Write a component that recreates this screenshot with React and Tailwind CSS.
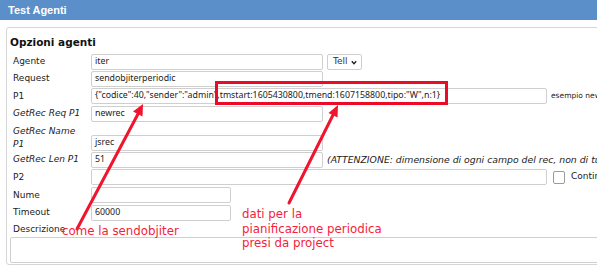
import React from 'react';

const ui = { fontFamily: '"DejaVu Sans", Verdana, sans-serif' };
const field = { fontFamily: '"Noto Sans", "Open Sans", sans-serif' };

const Field = ({ value = '', w = 'w-[232px]' }) => (
  <div
    className={`${w} h-[16px] shrink-0 border border-[#cfcfcf] rounded-[2px] bg-white px-[3px] flex items-center text-[8.8px] text-[#222] whitespace-nowrap overflow-hidden`}
    style={field}
  >
    {value}
  </div>
);

const Label = ({ children, italic }) => (
  <div className={`w-[81px] shrink-0 pl-[3px] text-[9px] leading-[13px] text-[#222] ${italic ? 'italic' : ''}`}>
    {children}
  </div>
);

const App = () => {
  return (
    <div className="relative w-[597px] h-[270px] overflow-hidden bg-white" style={ui}>
      {/* Header */}
      <div className="h-[20px] bg-[#5b8fca] flex items-center pl-[8px]">
        <span className="text-white font-bold text-[11px]" style={{ fontFamily: '"Liberation Sans", Arial, sans-serif' }}>
          Test Agenti
        </span>
      </div>

      {/* Panel */}
      <div className="mt-[7px] ml-[6px] w-[640px] h-[238px] border border-[#d6d6d6] rounded-[3px] pl-[3px] pt-[7px]">
        <div className="text-[10.5px] leading-[14px] font-bold text-[#111]">Opzioni agenti</div>

        <div className="mt-[4px] flex flex-col">
          <div className="flex items-center h-[17px]">
            <Label>Agente</Label>
            <Field value="iter" />
            <div className="ml-[4px] w-[35px] h-[16px] border border-[#cfcfcf] rounded-[2px] flex items-center pl-[5px] gap-[3px] text-[9px] text-[#333]">
              Tell
              <svg width="6" height="5" viewBox="0 0 6 5" className="mt-[1px]">
                <path d="M0.8 1.2 L3 3.6 L5.2 1.2" fill="none" stroke="#222" strokeWidth="1.4" />
              </svg>
            </div>
          </div>

          <div className="flex items-center h-[17px]">
            <Label>Request</Label>
            <Field value="sendobjiterperiodic" />
          </div>

          <div className="flex items-center h-[18px]">
            <Label>P1</Label>
            <Field
              w="w-[456px]"
              value={'{"codice":40,"sender":"admin",tmstart:1605430800,tmend:1607158800,tipo:"W",n:1}'}
            />
            <span className="ml-[4px] text-[7.5px] text-[#222] whitespace-nowrap">esempio newrec</span>
          </div>

          <div className="flex items-center h-[17px]">
            <Label italic>GetRec Req P1</Label>
            <Field value="newrec" />
          </div>

          <div className="flex items-end h-[29px]">
            <Label italic>
              GetRec Name
              <br />
              P1
            </Label>
            <Field value="jsrec" />
          </div>

          <div className="flex items-center h-[17px]">
            <Label italic>GetRec Len P1</Label>
            <Field value="51" />
            <span className="ml-[4px] italic text-[9.3px] text-[#222] whitespace-nowrap">
              (ATTENZIONE: dimensione di ogni campo del rec, non di tutto il rec)
            </span>
          </div>

          <div className="flex items-center h-[18px]">
            <Label>P2</Label>
            <Field w="w-[456px]" />
            <div className="ml-[6px] w-[12px] h-[13px] border border-[#9a9a9a] rounded-[2px] bg-white shrink-0" />
            <span className="ml-[6px] text-[9px] text-[#222] whitespace-nowrap">Continua</span>
          </div>

          <div className="flex items-center h-[18px]">
            <Label>Nume</Label>
            <Field w="w-[140px]" />
          </div>

          <div className="flex items-center h-[17px]">
            <Label>Timeout</Label>
            <Field w="w-[140px]" value="60000" />
          </div>

          <div className="flex items-center h-[16px]">
            <Label>Descrizione</Label>
          </div>

          <div className="h-[26px] w-[630px] border border-[#cfcfcf] rounded-[2px] bg-white" />
        </div>
      </div>

      {/* Red annotations */}
      <div className="absolute left-[215px] top-[81px] w-[233px] h-[24px] border-[3px] border-[#ec0a26]" />

      <svg className="absolute left-0 top-0" width="597" height="270" viewBox="0 0 597 270">
        <line x1="77" y1="229" x2="138" y2="114" stroke="#f0142e" strokeWidth="3" strokeLinecap="round" />
        <polygon points="143,104 142.5,116.5 133,111.5" fill="#f0142e" />
        <line x1="289" y1="203" x2="333" y2="115" stroke="#f0142e" strokeWidth="3" strokeLinecap="round" />
        <polygon points="338,105 337.5,117.5 328.5,113" fill="#f0142e" />
      </svg>

      <div className="absolute left-[62px] top-[223px] text-[11.8px] leading-[16px] text-[#f5213a] whitespace-nowrap">
        come la sendobjiter
      </div>
      <div className="absolute left-[242px] top-[207px] text-[11.8px] leading-[14.5px] text-[#f5213a] whitespace-nowrap">
        dati per la
        <br />
        pianificazione periodica
        <br />
        presi da project
      </div>
    </div>
  );
};

export default App;
